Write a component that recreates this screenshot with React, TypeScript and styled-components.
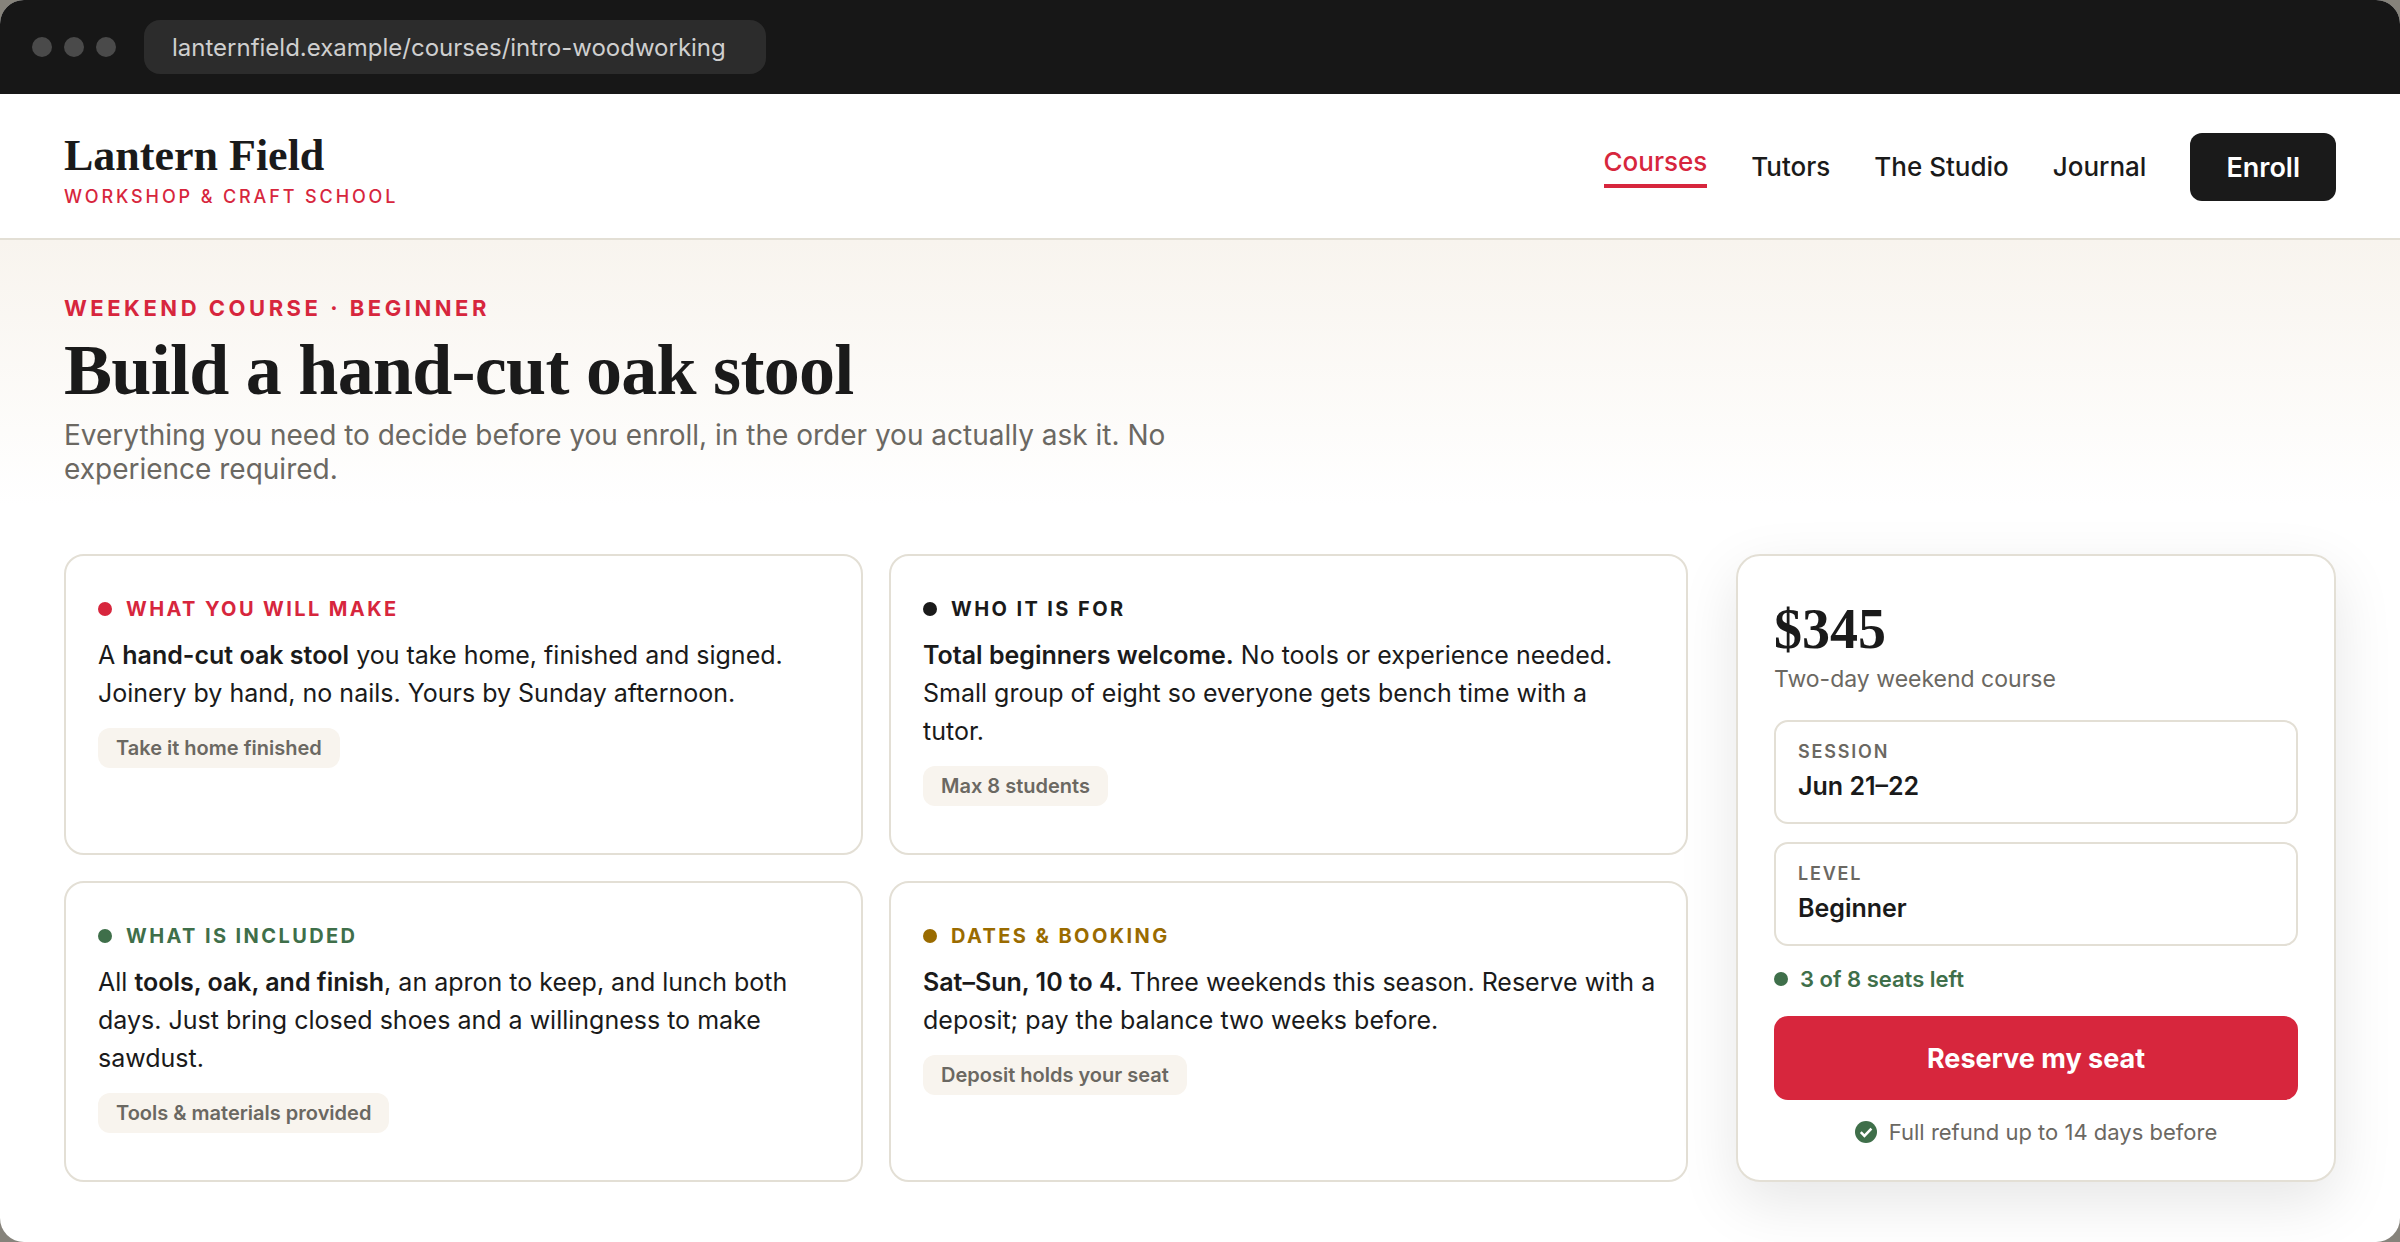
import React from "react";
import styled, { createGlobalStyle } from "styled-components";

const ink = "#1a1a1a";
const red = "#d7263d";
const green = "#3f6f4a";
const gold = "#9a6b00";
const muted = "#6b6862";
const line = "#e3dfd5";
const sand = "#f8f4ee";
const serif = `"Liberation Serif", "Times New Roman", serif`;

const Global = createGlobalStyle`
  * { box-sizing: border-box; margin: 0; }
  body {
    background: #86837b;
    color: ${ink};
    font-family: Inter, "Liberation Sans", sans-serif;
  }
`;

const Window = styled.div`
  min-height: 100vh;
  border-radius: 24px;
  overflow: hidden;
  background: #fff;
`;

const Chrome = styled.div`
  display: flex;
  align-items: center;
  gap: 28px;
  padding: 20px 32px;
  background: #171717;
`;

const Lights = styled.div`
  display: flex;
  gap: 12px;
`;

const Light = styled.span`
  width: 20px;
  height: 20px;
  border-radius: 50%;
  background: #4a4a4a;
`;

const Address = styled.input`
  width: 622px;
  height: 54px;
  padding: 0 28px;
  border: 0;
  border-radius: 16px;
  background: #2c2c2c;
  color: #cfcfcf;
  font: 400 24px Inter, "Liberation Sans", sans-serif;
`;

const Header = styled.header`
  display: flex;
  align-items: center;
  justify-content: space-between;
  padding: 32px 64px 30px;
  border-bottom: 2px solid ${line};
`;

const Brand = styled.a`
  display: flex;
  flex-direction: column;
  color: ${ink};
  text-decoration: none;
`;

const BrandName = styled.span`
  font: 700 44px/60px ${serif};
`;

const Tagline = styled.span`
  color: ${red};
  font-size: 18px;
  line-height: 22px;
  font-weight: 500;
  letter-spacing: 0.16em;
  text-transform: uppercase;
`;

const Nav = styled.nav`
  display: flex;
  align-items: center;
  gap: 44px;
`;

const NavLink = styled.a<{ $active?: boolean }>`
  color: ${(p) => (p.$active ? red : ink)};
  font-size: 26px;
  line-height: 32px;
  font-weight: 500;
  text-decoration: none;
  ${(p) => p.$active && `padding-bottom: 6px; border-bottom: 4px solid ${red};`}
`;

const Enroll = styled.button`
  height: 68px;
  padding: 0 36px;
  border: 0;
  border-radius: 12px;
  background: ${ink};
  color: #fff;
  font: 600 27px Inter, "Liberation Sans", sans-serif;
`;

const Hero = styled.section`
  padding: 54px 64px 20px;
  background: linear-gradient(${sand}, #fff);
`;

const Eyebrow = styled.p`
  color: ${red};
  font-size: 22px;
  line-height: 28px;
  font-weight: 700;
  letter-spacing: 0.16em;
  text-transform: uppercase;
`;

const Title = styled.h1`
  margin: 8px 0;
  font: 700 72px/80px ${serif};
  letter-spacing: -0.01em;
`;

const Lead = styled.p`
  max-width: 1120px;
  color: ${muted};
  font-size: 28px;
  line-height: 34px;
`;

const Main = styled.main`
  display: grid;
  grid-template-columns: 1fr 600px;
  gap: 48px;
  padding: 48px 64px 60px;
`;

const Cards = styled.div`
  display: grid;
  grid-template-columns: 1fr 1fr;
  grid-auto-rows: 1fr;
  gap: 26px;
`;

const Card = styled.article`
  padding: 38px 28px 38px 32px;
  border: 2px solid ${line};
  border-radius: 20px;
`;

const Dot = styled.span`
  width: 14px;
  height: 14px;
  border-radius: 50%;
  background: currentColor;
`;

const CardLabel = styled.h2<{ $color: string }>`
  display: flex;
  align-items: center;
  gap: 14px;
  color: ${(p) => p.$color};
  font-size: 20px;
  line-height: 30px;
  font-weight: 700;
  letter-spacing: 0.12em;
  text-transform: uppercase;
`;

const CardText = styled.p`
  margin: 12px 0 16px;
  font-size: 25px;
  line-height: 38px;

  strong {
    font-weight: 600;
  }
`;

const Tag = styled.span`
  display: inline-block;
  padding: 5px 18px;
  border-radius: 12px;
  background: ${sand};
  color: ${muted};
  font-size: 20px;
  line-height: 30px;
  font-weight: 600;
`;

const Booking = styled.aside`
  padding: 38px 36px 34px;
  border: 2px solid ${line};
  border-radius: 24px;
  background: #fff;
  box-shadow: 0 20px 60px rgba(0, 0, 0, 0.1);
`;

const Price = styled.p`
  font: 700 56px/70px ${serif};
`;

const PriceNote = styled.p`
  color: ${muted};
  font-size: 23px;
  line-height: 30px;
`;

const Fields = styled.dl`
  display: grid;
  gap: 18px;
  margin: 26px 0 20px;
`;

const Field = styled.div`
  padding: 16px 22px;
  border: 2px solid ${line};
  border-radius: 14px;

  dt {
    color: ${muted};
    font-size: 18px;
    line-height: 28px;
    font-weight: 600;
    letter-spacing: 0.1em;
    text-transform: uppercase;
  }

  dd {
    font-size: 25px;
    line-height: 40px;
    font-weight: 600;
  }
`;

const Seats = styled.p`
  display: flex;
  align-items: center;
  gap: 12px;
  color: ${green};
  font-size: 22px;
  line-height: 26px;
  font-weight: 600;
`;

const Reserve = styled.button`
  width: 100%;
  height: 84px;
  margin: 24px 0 18px;
  border: 0;
  border-radius: 14px;
  background: ${red};
  color: #fff;
  font: 700 27px Inter, "Liberation Sans", sans-serif;
`;

const Refund = styled.p`
  display: flex;
  align-items: center;
  justify-content: center;
  gap: 12px;
  color: ${muted};
  font-size: 22px;
  line-height: 28px;
`;

const CheckIcon = () => (
  <svg width="22" height="22" viewBox="0 0 22 22" aria-hidden="true">
    <circle cx="11" cy="11" r="11" fill={green} />
    <path d="M5.8 11.2l3.6 3.6 7-7.2" fill="none" stroke="#fff" strokeWidth="2.6" />
  </svg>
);

const cards = [
  {
    label: "What you will make",
    color: red,
    text: (
      <>
        A <strong>hand-cut oak stool</strong> you take home, finished and signed. Joinery by hand, no
        nails. Yours by Sunday afternoon.
      </>
    ),
    tag: "Take it home finished",
  },
  {
    label: "Who it is for",
    color: ink,
    text: (
      <>
        <strong>Total beginners welcome.</strong> No tools or experience needed. Small group of eight
        so everyone gets bench time with a <br />
        tutor.
      </>
    ),
    tag: "Max 8 students",
  },
  {
    label: "What is included",
    color: green,
    text: (
      <>
        All <strong>tools, oak, and finish</strong>, an apron to keep, and lunch both days. Just bring
        closed shoes and a willingness to make sawdust.
      </>
    ),
    tag: "Tools & materials provided",
  },
  {
    label: "Dates & booking",
    color: gold,
    text: (
      <>
        <strong>Sat–Sun, 10 to 4.</strong> Three weekends this season. Reserve with a deposit; pay the
        balance two weeks before.
      </>
    ),
    tag: "Deposit holds your seat",
  },
];

export default function App() {
  return (
    <>
      <Global />
      <Window>
        <Chrome>
          <Lights>
            <Light />
            <Light />
            <Light />
          </Lights>
          <Address
            readOnly
            aria-label="Address"
            value="lanternfield.example/courses/intro-woodworking"
          />
        </Chrome>
        <Header>
          <Brand href="#">
            <BrandName>Lantern Field</BrandName>
            <Tagline>Workshop &amp; Craft School</Tagline>
          </Brand>
          <Nav>
            <NavLink href="#courses" $active>
              Courses
            </NavLink>
            <NavLink href="#tutors">Tutors</NavLink>
            <NavLink href="#studio">The Studio</NavLink>
            <NavLink href="#journal">Journal</NavLink>
            <Enroll type="button">Enroll</Enroll>
          </Nav>
        </Header>
        <Hero>
          <Eyebrow>Weekend course · Beginner</Eyebrow>
          <Title>Build a hand-cut oak stool</Title>
          <Lead>
            Everything you need to decide before you enroll, in the order you actually ask it. No
            experience required.
          </Lead>
        </Hero>
        <Main>
          <Cards>
            {cards.map((card) => (
              <Card key={card.label}>
                <CardLabel $color={card.color}>
                  <Dot />
                  {card.label}
                </CardLabel>
                <CardText>{card.text}</CardText>
                <Tag>{card.tag}</Tag>
              </Card>
            ))}
          </Cards>
          <Booking>
            <Price>$345</Price>
            <PriceNote>Two-day weekend course</PriceNote>
            <Fields>
              <Field>
                <dt>Session</dt>
                <dd>Jun 21–22</dd>
              </Field>
              <Field>
                <dt>Level</dt>
                <dd>Beginner</dd>
              </Field>
            </Fields>
            <Seats>
              <Dot />3 of 8 seats left
            </Seats>
            <Reserve type="button">Reserve my seat</Reserve>
            <Refund>
              <CheckIcon />
              Full refund up to 14 days before
            </Refund>
          </Booking>
        </Main>
      </Window>
    </>
  );
}
